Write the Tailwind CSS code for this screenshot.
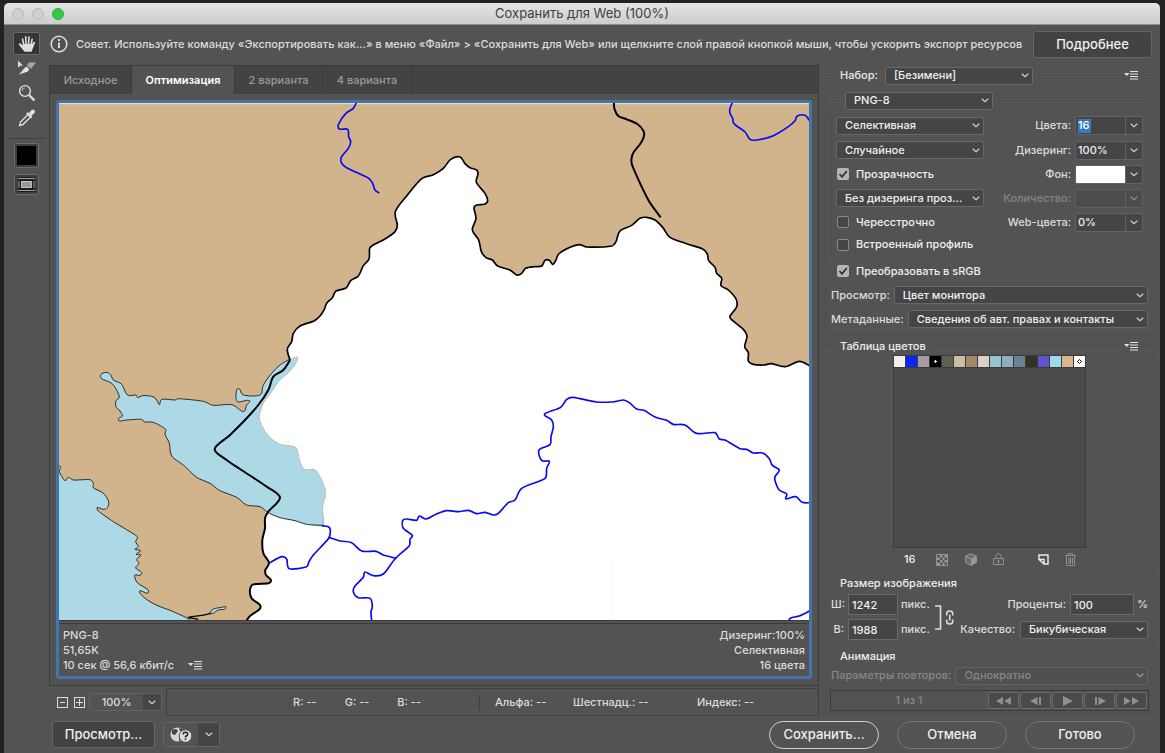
<!DOCTYPE html>
<html lang="ru">
<head>
<meta charset="utf-8">
<title>Сохранить для Web (100%)</title>
<script src="https://cdn.jsdelivr.net/npm/@tailwindcss/browser@4"></script>
</head>
<body class="bg-[#242323] font-['Inter',sans-serif] text-[11px] leading-[15px] font-medium text-[#dcdcdc]">
<svg class="hidden">
  <symbol id="chev" viewBox="0 0 8 5"><path d="M.7.8 4 3.800 7.300.8" fill="none" stroke="#d0d0d0" stroke-width="1.200"/></symbol>
  <symbol id="menu" viewBox="0 0 15 9"><path d="M0 2h5.500L2.750 5z" fill="#e2e2e2"/><path d="M6 .5h8M6 3h8M6 5.500h8M6 8h8" stroke="#e2e2e2" stroke-width="1.100"/></symbol>
</svg>
<div class="flex min-h-screen flex-col pt-[3px] pr-[5px] pl-1">
<div class="flex flex-1 flex-col rounded-t-[5px] border-b border-[#444] bg-[#535353]">
  <header class="grid h-[22px] grid-cols-[1fr_auto_1fr] items-center rounded-t-[5px] border-b border-[#8d9390] bg-linear-to-b from-[#e4e4e4] to-[#cdcdcd] px-2">
    <div class="flex gap-2">
      <button aria-label="Закрыть" class="size-3 rounded-full border border-[#b9b9b9] bg-[#d0d0d0]"></button>
      <button aria-label="Свернуть" class="size-3 rounded-full border border-[#b9b9b9] bg-[#d0d0d0]"></button>
      <button aria-label="Развернуть" class="size-3 rounded-full border border-[#2cad3c] bg-[#35c84a]"></button>
    </div>
    <h1 class="text-[13px] font-normal text-[#404040]">Сохранить для Web (100%)</h1>
    <span></span>
  </header>

  <div class="flex flex-1">
    <nav aria-label="Инструменты" class="flex w-[45px] flex-col items-center pt-[7px]">
      <button aria-label="Рука" class="grid h-[23px] w-[27px] place-items-center rounded-[2px] border border-[#6a6a6a] bg-[#353535]">
        <svg width="18" height="18" viewBox="0 0 18 18"><path d="M5.800 10.500 4.600 4M8 9 7.700 1.800M10.500 9 11 2M13 10l1.100-5.600" stroke="#dedede" stroke-width="1.600" stroke-linecap="round"/><path d="M5 9h9l1.200-1.600q1.400-1.300 2 0l-1.800 4.600-1.900 4.700H6.600L3.500 13 .8 9.500q-.1-1.600 1.600-1.100L5 10.600z" fill="#dedede"/></svg>
      </button>
      <button aria-label="Выделение фрагмента" class="grid h-[26px] w-[27px] place-items-center">
        <svg width="20" height="16" viewBox="0 0 20 16"><path d="M1 .5v7.500l2-2.200h3z" fill="#dedede"/><path d="M9.500 6 12 2.500h7L13.800 9 11.500 6.500z" fill="#a5a5a5"/><path d="m2 14.500 6-7 2-.8 2.200 2.200L11 11.500z" fill="#e2e2e2"/></svg>
      </button>
      <button aria-label="Масштаб" class="grid h-[24px] w-[27px] place-items-center">
        <svg width="18" height="18" viewBox="0 0 18 18" fill="none" stroke="#dedede"><circle cx="7" cy="7" r="5.400" stroke-width="1.400"/><path d="M4.200 7Q4.200 4 7 4" stroke="#aaa" stroke-width="1.200"/><path d="m11 11 5.500 5.500" stroke-width="2.400"/></svg>
      </button>
      <button aria-label="Пипетка" class="grid h-[26px] w-[27px] place-items-center">
        <svg width="18" height="18" viewBox="0 0 18 18"><path d="M9.500 6 2.500 13 1.600 16.400l3.400-.9 7-7" fill="none" stroke="#dedede" stroke-width="1.400"/><path d="m8 4.800 1.500-1.500 1.500.7 2.500-3q1.700-1 2.900.2t.2 2.900l-3 2.500.7 1.500-1.500 1.500z" fill="#dedede"/></svg>
      </button>
      <div class="mt-[7px] h-px w-[37px] bg-[#3f3f3f]"></div>
      <button aria-label="Цвет пипетки" class="mt-1 grid size-[25px] place-items-center rounded-[2px] border border-[#6c6c6c] bg-[#3f3f3f]"><span class="size-[19px] bg-black"></span></button>
      <button aria-label="Показать фрагменты" class="mt-[6px] grid h-[21px] w-[25px] place-items-center rounded-[2px] border border-[#6c6c6c] bg-[#3f3f3f]">
        <svg width="17" height="15" viewBox="0 0 17 15"><path d="M0 0h17v15H0z" fill="#1c1c1c"/><path d="M0 1.500h17M0 13.500h17M1 4v7M16 4v7" stroke="#9c9c9c"/><path d="M3.500 4.500h10v6h-10z" fill="#999" stroke="#c4c4c4"/></svg>
      </button>
    </nav>

    <div class="flex min-w-0 flex-1 flex-col">
      <div class="flex h-[38px] items-center pr-2 pl-[1px]">
        <svg width="18" height="18" viewBox="0 0 18 18" class="mr-2 shrink-0"><circle cx="9" cy="9" r="7.800" fill="none" stroke="#dedede" stroke-width="1.500"/><path d="M9 4v2M9 7.500V13" stroke="#dedede" stroke-width="1.900"/></svg>
        <p class="flex-1 whitespace-nowrap">Совет. Используйте команду «Экспортировать как...» в меню «Файл» &gt; «Сохранить для Web» или щелкните слой правой кнопкой мыши, чтобы ускорить экспорт ресурсов</p>
        <button class="h-[27px] w-[119px] shrink-0 rounded-[3px] border border-[#666] bg-[#434343] text-[13px] text-[#f0f0f0]">Подробнее</button>
      </div>

      <div class="flex flex-1">
        <main class="mt-[2px] flex min-w-0 flex-1 flex-col">
          <section class="flex flex-1 flex-col border border-[#3b3b3b]">
            <div role="tablist" class="flex h-[28px] bg-[#434343] text-[#9a9a9a]">
              <button role="tab" class="w-[82px] border-r border-[#3a3a3a]">Исходное</button>
              <button role="tab" aria-selected="true" class="w-[102px] bg-[#535353] font-semibold text-white">Оптимизация</button>
              <button role="tab" class="w-[89px] border-x border-[#3a3a3a]">2 варианта</button>
              <button role="tab" class="w-[89px] border-r border-[#3a3a3a]">4 варианта</button>
            </div>
            <div class="mx-[6px] mt-[6px] mb-[6px] flex flex-1 flex-col rounded-[3px] border-3 border-[#4475aa]">
              <svg id="map" class="block w-full flex-1" viewBox="177 309 2250 1551" preserveAspectRatio="xMidYMid slice" fill="none" stroke-linejoin="round">
                <path d="M177 309h2250v1551H177z" fill="#d1b48c"/>
                <path d="M177 311h2250" stroke="#eee6d8" stroke-width="3"/>
                <path fill="#fff" d="M740 1860 750 1848 778 1828 780 1815 755 1795 750 1770 760 1753 805 1750 813 1740 798 1725 796 1710 807 1688 790 1660 787 1620 795 1585 795 1555 805 1535 840 1493 800 1460 644 1347 690 1305 735 1260 775 1215 805 1170 820 1130 850 1110 870 1080 862 1048 875 1025 880 1000 900 978 942 963 960 948 973 928 980 910 997 893 1008 873 1038 864 1052 842 1075 828 1090 797 1107 777 1109 745 1120 735 1155 717 1185 695 1192 675 1186 635 1220 588 1265 536 1300 524 1330 505 1352 478 1380 471 1395 491 1410 503 1430 510 1434 522 1429 547 1455 580 1463 602 1453 613 1430 615 1422 625 1428 655 1417 690 1436 720 1444 755 1458 773 1477 780 1493 798 1530 810 1550 825 1565 820 1577 805 1605 800 1625 798 1635 781 1648 781 1658 793 1668 780 1676 762 1710 742 1738 734 1760 741 1835 738 1848 725 1860 693 1895 676 1920 655 1940 652 1965 660 1988 682 2010 712 2060 731 2108 747 2122 762 2126 782 2145 802 2150 820 2165 835 2163 857 2185 870 2208 897 2210 920 2190 948 2194 958 2230 988 2241 1008 2234 1040 2245 1058 2245 1083 2260 1093 2290 1095 2315 1091 2355 1100 2398 1084 2430 1098V1860z"/>
                <g transform="translate(150 1020)" stroke="#2c2c2c" stroke-width="3">
                  <path stroke="none" fill="#add8e6" d="M743 52 738 70 715 98 690 120 665 155 640 190 628 230 635 255 655 287 690 313 720 317 740 325 747 355 762 387 795 390 815 420 827 460 818 500 820 556 770 553 735 542 690 533 655 518 630 500 590 495 560 472 510 452 480 430 440 412 400 375 365 348 358 310 345 283 347 268 310 247 283 246 275 238 230 240 208 243 205 236 217 228 210 213 198 200 198 182 208 172 200 150 185 130 155 116 152 104 168 97 182 104 190 120 215 133 232 165 258 165 263 173 278 167 305 169 318 177 328 194 335 178 375 180 385 176 460 184 490 196 545 194 580 215 590 195 600 184 590 181 565 186 558 175 560 150 568 146 580 165 630 165 640 135 665 100 690 75 720 57z"/>
                  <path stroke="#b7a58c" stroke-dasharray="5 3" d="M722 55 743 52 738 70 715 98 690 120 665 155 640 190 628 230 635 255 655 287 690 313 720 317 740 325 747 355 762 387 795 390 815 420 827 460 818 500 820 556"/>
                  <path d="M820 556 770 553 735 542 690 533 655 518 630 500 590 495 560 472 510 452 480 430 440 412 400 375 365 348 358 310 345 283 347 268 310 247 283 246 275 238 230 240 208 243 205 236 217 228 210 213 198 200 198 182 208 172 200 150 185 130 155 116 152 104 168 97 182 104 190 120 215 133 232 165 258 165 263 173 278 167 305 169 318 177 328 194 335 178 375 180 385 176 460 184 490 196 545 194 580 215 590 195 600 184 590 181 565 186 558 175 560 150 568 146 580 165 630 165 640 135 665 100 690 75 720 57"/>
                  <path fill="#add8e6" d="M22 378 32 380 28 395 45 422 55 412 70 420 120 419 130 430 130 443 160 460 176 485 172 503 160 508 142 502 145 513 190 545 262 590 257 605 265 620 255 628 272 632 258 643 273 645 260 658 267 670 257 684 275 697 270 706 254 706 262 728 295 750 292 760 270 752 272 763 300 785 330 800 370 815 415 842 22 846z"/>
                  <path fill="#add8e6" d="M478 820 490 807 515 802 527 800 524 808 505 810 490 820z"/>
                  <path d="M445 838 415 832 450 827 482 820" stroke="#000" stroke-width="4"/>
                  <path d="M285 668H650" stroke="#c4bba8" stroke-width="2" stroke-dasharray="4 6"/>
                </g>
                <path stroke="#000" stroke-width="5" d="M870 1080 862 1048 875 1025 880 1000 900 978 942 963 960 948 973 928 980 910 997 893 1008 873 1038 864 1052 842 1075 828 1090 797 1107 777 1109 745 1120 735 1155 717 1185 695 1192 675 1186 635 1220 588 1265 536 1300 524 1330 505 1352 478 1380 471 1395 491 1410 503 1430 510 1434 522 1429 547 1455 580 1463 602 1453 613 1430 615 1422 625 1428 655 1417 690 1436 720 1444 755 1458 773 1477 780 1493 798 1530 810 1550 825 1565 820 1577 805 1605 800 1625 798 1635 781 1648 781 1658 793 1668 780 1676 762 1710 742 1738 734 1760 741 1835 738 1848 725 1860 693 1895 676 1920 655 1940 652 1965 660 1988 682 2010 712 2060 731 2108 747 2122 762 2126 782 2145 802 2150 820 2165 835 2163 857 2185 870 2208 897 2210 920 2190 948 2194 958 2230 988 2241 1008 2234 1040 2245 1058 2245 1083 2260 1093 2290 1095 2315 1091 2355 1100 2398 1084 2430 1098"/>
                <path stroke="#000" stroke-width="6" d="M738 1864 750 1848 778 1828 780 1815 755 1795 750 1770 760 1753 805 1750 813 1740 798 1725 796 1710 807 1688 790 1660 787 1620 795 1585 795 1555 805 1535 840 1493 800 1460 720 1407 680 1380 644 1347 690 1305 735 1260 775 1215 805 1170 820 1130 850 1110 870 1080"/>
                <path d="M1838 310V736" stroke="#c8b89c" stroke-width="3"/>
                <path d="M1837 1692V1860" stroke="#d9d9d9" stroke-width="2" stroke-dasharray="3 6"/>
                <path stroke="#000" stroke-width="6" d="M1842 306 1843 325 1855 348 1880 358 1912 372 1930 392 1932 408 1922 430 1900 458 1894 480 1898 500 1945 600 1982 652"/>
                <g stroke="#0a0aee" stroke-width="5">
                  <path d="M1070 305 1060 325 1037 341 1016 372 1018 387 1043 388 1046 410 1052 425 1045 445 1025 470 1024 488 1040 503 1105 534 1118 550 1125 570 1138 579"/>
                  <path d="M2198 306 2190 325 2190 340 2198 355 2200 368 2210 378 2235 396 2250 418 2270 420 2320 407 2365 380 2385 362 2392 348 2415 346 2430 364"/>
                  <g transform="translate(750 1140)">
                    <path d="M365 722 363 695 367 680 360 655 325 653 310 635 315 618 340 592 345 576 370 587 400 582 435 537 478 497 480 478 487 466 460 445 458 422 470 417 500 421 508 408 528 417 555 404 590 392 625 395 655 391 680 401 705 397 730 405 745 400 775 368 795 360 815 325 885 295 890 265 898 244 875 241 867 210 900 194 903 170 910 140 905 120 884 102 932 82 950 58 970 52 1040 66 1095 65 1120 60 1138 68 1160 87 1182 91 1215 111 1250 121 1270 133 1305 135 1340 160 1395 158 1408 177 1425 180 1470 206 1490 208 1510 219 1538 219 1558 236 1567 256 1588 270 1575 290 1576 305 1588 330 1610 342 1608 357 1637 350 1657 367 1680 368"/>
                    <path d="M215 437 235 440 241 450 236 475 190 525 177 545 170 560 118 566 110 537 95 530 60 548M236 472 270 483 305 488 335 513 378 514 400 525 438 535M1616 722 1622 714 1650 707 1680 692"/>
                  </g>
                </g>
              </svg>
              <div class="h-[4px] border-y border-[#3b3b3b]"></div>
              <div class="flex justify-between px-1 pt-1 pb-[3px]">
                <div><p>PNG-8</p><p>51,65K</p><div class="flex items-center gap-[14px]">10 сек @ 56,6 кбит/с <button aria-label="Меню скорости загрузки"><svg width="15" height="9"><use href="#menu"/></svg></button></div></div>
                <div class="text-right"><p>Дизеринг:100%</p><p>Селективная</p><p>16 цвета</p></div>
              </div>
            </div>
          </section>
          <div class="mt-[2px] flex h-[28px] items-center">
            <button aria-label="Уменьшить" class="ml-2 grid size-[11px] place-items-center border border-[#dedede]"><span class="h-px w-[5px] bg-[#dedede]"></span></button>
            <button aria-label="Увеличить" class="ml-[6px] grid size-[11px] place-items-center border border-[#dedede]"><svg width="7" height="7"><path d="M0 3.500h7M3.500 0v7" stroke="#dedede"/></svg></button>
            <div class="ml-1 flex h-[18px] w-[73px] rounded-[2px] border border-[#636363]">
              <input aria-label="Масштаб просмотра" value="100%" class="w-0 flex-1 text-center text-[#dcdcdc]">
              <button aria-label="Выбрать масштаб" class="grid w-[18px] place-items-center bg-[#454545]"><svg width="8" height="5"><use href="#chev"/></svg></button>
            </div>
            <div class="ml-1 flex h-[28px] flex-1 items-center border border-[#3f3f3f]">
              <div class="flex w-[313px] justify-end gap-[28px] border-r border-[#3f3f3f] pr-[58px]"><span>R: --</span><span>G: --</span><span>B: --</span></div>
              <span class="ml-[15px] w-[78px]">Альфа: --</span><span class="w-[124px]">Шестнадц.: --</span><span>Индекс: --</span>
            </div>
          </div>
        </main>

        <aside class="mr-[7px] ml-[6px] w-[328px] shrink-0">
          <section>
            <div class="flex h-[25px] items-center">
              <span class="h-px w-[10px] bg-[#4d4d4d]"></span>
              <label for="preset" class="ml-[5px] w-[45px] text-[#e8e8e8]">Набор:</label>
              <div class="grid w-[148px] items-center"><select id="preset" class="col-start-1 row-start-1 h-[18px] appearance-none rounded-[2px] border border-[#686868] bg-[#454545] pl-2 text-[#f0f0f0]"><option>[Безимени]</option></select><svg width="8" height="5" class="pointer-events-none col-start-1 row-start-1 mr-1 justify-self-end"><use href="#chev"/></svg></div>
              <span class="ml-[5px] h-px flex-1 bg-[#4d4d4d]"></span>
              <button aria-label="Меню оптимизации" class="mx-[3px]"><svg width="15" height="9"><use href="#menu"/></svg></button>
              <span class="h-px w-[11px] bg-[#4d4d4d]"></span>
            </div>
            <div class="border-x border-b border-[#4f4f4f] pr-1 pb-px pl-[5px]">
              <div class="flex h-[25px] items-center">
                <span class="mr-[5px] h-px w-[9px] bg-[#4d4d4d]"></span>
                <div class="grid w-[148px] items-center"><select aria-label="Формат" class="col-start-1 row-start-1 h-[18px] appearance-none rounded-[2px] border border-[#686868] bg-[#454545] pl-2 text-[#f0f0f0]"><option>PNG-8</option></select><svg width="8" height="5" class="pointer-events-none col-start-1 row-start-1 mr-1 justify-self-end"><use href="#chev"/></svg></div>
                <span class="ml-[5px] h-px flex-1 bg-[#4d4d4d]"></span>
              </div>
              <div class="border-x border-b border-[#4f4f4f] pr-1 pb-[2px] pl-1">
                <div class="flex h-[25px] items-center">
                  <div class="grid w-[148px] items-center"><select aria-label="Алгоритм" class="col-start-1 row-start-1 h-[18px] appearance-none rounded-[2px] border border-[#686868] bg-[#454545] pl-2 text-[#f0f0f0]"><option>Селективная</option></select><svg width="8" height="5" class="pointer-events-none col-start-1 row-start-1 mr-1 justify-self-end"><use href="#chev"/></svg></div>
                  <label for="colors" class="mr-1 flex-1 text-right">Цвета:</label>
                  <div class="flex h-[19px] w-[68px] rounded-[2px] border border-[#636363] bg-[#454545]"><div class="flex flex-1 items-center border-r border-[#636363] pl-[2px]"><input id="colors" value="16" class="h-[14px] w-[13px] bg-[#3b7bbd] text-white"></div><button aria-label="Выбрать число цветов" class="grid w-4 place-items-center"><svg width="8" height="5"><use href="#chev"/></svg></button></div>
                </div>
                <div class="flex h-[24px] items-center">
                  <div class="grid w-[148px] items-center"><select aria-label="Метод дизеринга" class="col-start-1 row-start-1 h-[18px] appearance-none rounded-[2px] border border-[#686868] bg-[#454545] pl-2 text-[#f0f0f0]"><option>Случайное</option></select><svg width="8" height="5" class="pointer-events-none col-start-1 row-start-1 mr-1 justify-self-end"><use href="#chev"/></svg></div>
                  <label for="dither" class="mr-1 flex-1 text-right">Дизеринг:</label>
                  <div class="flex h-[19px] w-[68px] rounded-[2px] border border-[#636363] bg-[#454545]"><input id="dither" value="100%" class="w-0 flex-1 border-r border-[#636363] pl-[2px] text-[#f0f0f0]"><button aria-label="Выбрать дизеринг" class="grid w-4 place-items-center"><svg width="8" height="5"><use href="#chev"/></svg></button></div>
                </div>
                <div class="flex h-[24px] items-center pl-px">
                  <label class="flex items-center gap-[7px] text-[#f0f0f0]"><span class="grid"><input type="checkbox" checked class="col-start-1 row-start-1 size-[12px] appearance-none rounded-[2px] bg-[#b5b5b5]"><svg width="12" height="12" class="col-start-1 row-start-1"><path d="m2.500 6 2.500 2.800L9.800 3" fill="none" stroke="#333" stroke-width="1.800"/></svg></span>Прозрачность</label>
                  <span class="mr-1 flex-1 text-right">Фон:</span>
                  <div class="flex h-[19px] w-[68px] rounded-[2px] border border-[#636363] bg-[#454545]"><button aria-label="Цвет фона" class="flex-1 border-r border-[#636363] bg-white"></button><button aria-label="Выбрать фон" class="grid w-4 place-items-center"><svg width="8" height="5"><use href="#chev"/></svg></button></div>
                </div>
                <div class="flex h-[24px] items-center">
                  <div class="grid w-[148px] items-center"><select aria-label="Дизеринг прозрачности" class="col-start-1 row-start-1 h-[18px] appearance-none rounded-[2px] border border-[#686868] bg-[#454545] pl-2 text-[#f0f0f0]"><option>Без дизеринга проз...</option></select><svg width="8" height="5" class="pointer-events-none col-start-1 row-start-1 mr-1 justify-self-end"><use href="#chev"/></svg></div>
                  <label for="amount" class="mr-1 flex-1 text-right text-[#848484]">Количество:</label>
                  <div class="flex h-[19px] w-[68px] rounded-[2px] border border-[#5f5f5f] bg-[#4c4c4c]"><input id="amount" disabled class="w-0 flex-1 border-r border-[#5f5f5f]"><button disabled aria-label="Выбрать количество" class="grid w-4 place-items-center opacity-50"><svg width="8" height="5"><use href="#chev"/></svg></button></div>
                </div>
                <div class="flex h-[24px] items-center pl-px">
                  <label class="flex items-center gap-[7px] text-[#f0f0f0]"><input type="checkbox" class="size-[12px] appearance-none rounded-[2px] border border-[#8a8a8a] bg-[#454545]">Чересстрочно</label>
                  <label for="webc" class="mr-1 flex-1 text-right">Web-цвета:</label>
                  <div class="flex h-[19px] w-[68px] rounded-[2px] border border-[#636363] bg-[#454545]"><input id="webc" value="0%" class="w-0 flex-1 border-r border-[#636363] pl-[2px] text-[#f0f0f0]"><button aria-label="Выбрать Web-цвета" class="grid w-4 place-items-center"><svg width="8" height="5"><use href="#chev"/></svg></button></div>
                </div>
                <div class="flex h-[21px] items-center pl-px">
                  <label class="flex items-center gap-[7px] text-[#f0f0f0]"><input type="checkbox" class="size-[12px] appearance-none rounded-[2px] border border-[#8a8a8a] bg-[#454545]">Встроенный профиль</label>
                </div>
              </div>
              <div class="flex h-[26px] items-center pl-[6px]">
                <label class="flex items-center gap-[7px] text-[#f0f0f0]"><span class="grid"><input type="checkbox" checked class="col-start-1 row-start-1 size-[12px] appearance-none rounded-[2px] bg-[#b5b5b5]"><svg width="12" height="12" class="col-start-1 row-start-1"><path d="m2.500 6 2.500 2.800L9.800 3" fill="none" stroke="#333" stroke-width="1.800"/></svg></span>Преобразовать в sRGB</label>
              </div>
              <div class="flex h-[22px] items-center gap-1">
                <label for="view">Просмотр:</label>
                <div class="grid flex-1 items-center"><select id="view" class="col-start-1 row-start-1 h-[18px] appearance-none rounded-[2px] border border-[#686868] bg-[#454545] pl-2 text-[#f0f0f0]"><option>Цвет монитора</option></select><svg width="8" height="5" class="pointer-events-none col-start-1 row-start-1 mr-1 justify-self-end"><use href="#chev"/></svg></div>
              </div>
              <div class="flex h-[26px] items-center gap-1">
                <label for="meta">Метаданные:</label>
                <div class="grid flex-1 items-center"><select id="meta" class="col-start-1 row-start-1 h-[18px] appearance-none rounded-[2px] border border-[#686868] bg-[#454545] pl-2 text-[#f0f0f0]"><option>Сведения об авт. правах и контакты</option></select><svg width="8" height="5" class="pointer-events-none col-start-1 row-start-1 mr-1 justify-self-end"><use href="#chev"/></svg></div>
              </div>
            </div>
          </section>

          <section class="mt-[3px]">
            <div class="flex h-[18px] items-center">
              <span class="h-px w-[10px] bg-[#4d4d4d]"></span>
              <h2 class="mx-[5px] text-[#eee]">Таблица цветов</h2>
              <span class="h-px flex-1 bg-[#4d4d4d]"></span>
              <button aria-label="Меню таблицы цветов" class="mx-[3px]"><svg width="15" height="9"><use href="#menu"/></svg></button>
              <span class="h-px w-[11px] bg-[#4d4d4d]"></span>
            </div>
            <div class="border-x border-b border-[#4f4f4f]">
              <div class="ml-[67px] size-[193px] border border-[#3b3b3b] bg-[#4a4a4a]">
                <div class="grid h-[12px] grid-cols-16 gap-px border-b border-[#3b3b3b] bg-[#3b3b3b]">
                  <i class="bg-[#f3eee7]"></i><i class="bg-[#0b24fb]"></i><i class="bg-[#a69ba0]"></i><i class="grid place-items-center bg-black"><svg width="3" height="3"><path d="M0 1.500h3M1.500 0v3" stroke="#fff"/></svg></i><i class="bg-[#605f50]"></i><i class="bg-[#cbbda1]"></i><i class="bg-[#a3886a]"></i><i class="bg-[#dbd2c6]"></i><i class="bg-[#94c5d3]"></i><i class="bg-[#8cafc4]"></i><i class="bg-[#6d8195]"></i><i class="bg-[#363029]"></i><i class="bg-[#6152cf]"></i><i class="bg-[#9ddbe6]"></i><i class="bg-[#dcb48d]"></i><i class="grid place-items-center bg-white"><svg width="7" height="7"><path d="m3.500 1.500 2 2-2 2-2-2z" fill="none" stroke="#000"/></svg></i>
                </div>
              </div>
              <div class="flex h-[23px] items-center pl-[78px]">
                <span class="w-[32px] text-[#eee]">16</span>
                <button aria-label="Прозрачный цвет" class="mr-[17px]"><svg width="12" height="12"><path d="M.5.500h11v11H.5z" fill="none" stroke="#969696"/><path d="M4 1h2.500v2.500H4zM8.500 1H11v2.500H8.500zM1 3.500h3V6H1zM6.500 3.500h2V6h-2zM4 6h2.500v2.500H4zM8.500 6H11v2.500H8.500zM1 8.500h3V11H1zM6.500 8.500h2V11h-2z" fill="#969696"/></svg></button>
                <button aria-label="Web-цвет" class="mr-[16px]"><svg width="12" height="13" viewBox="0 0 12 13"><path d="m6 .5 5.300 2.700v6.300L6 12.500.7 9.500V3.200z" fill="#6c6c6c" stroke="#999"/><path d="M6 6l5.300-2.800v6.300L6 12.500z" fill="#999"/><path d="M.7 3.200 6 6l5.300-2.800" fill="none" stroke="#999"/></svg></button>
                <button aria-label="Закрепить цвет" class="mr-[34px]"><svg width="11" height="13" viewBox="0 0 11 13" fill="none" stroke="#909090"><path d="M.5 5.500h10v6H.5zM3 5.500V3q0-2.200 2.500-2.200T8 3v2.500"/><path d="M5.500 7v3" stroke-width="1.600"/></svg></button>
                <button aria-label="Новый цвет" class="mr-[16px]"><svg width="11" height="11" fill="none" stroke="#ededed" stroke-width="1.400"><path d="M1 5V1h9v9H6L1 5.500h5V10"/></svg></button>
                <button aria-label="Удалить цвет"><svg width="11" height="13" viewBox="0 0 11 13" fill="none" stroke="#909090"><path d="M0 2.500h11M3.500 2V.5h4V2M1.500 3v9.500h8V3M4 4.500V11M5.500 4.500V11M7.500 4.500V11"/></svg></button>
              </div>
            </div>
          </section>

          <section class="mt-[2px]">
            <div class="flex h-[19px] items-center"><span class="h-px w-[10px] bg-[#4d4d4d]"></span><h2 class="mx-[5px] text-[#eee]">Размер изображения</h2><span class="h-px flex-1 bg-[#4d4d4d]"></span></div>
            <div class="flex border-x border-b border-[#4f4f4f] pr-1 pb-[3px] pl-[5px]">
              <div class="flex w-[99px] flex-col gap-1 pt-px">
                <div class="flex items-center"><label for="w" class="mr-1 w-[13px] text-right">Ш:</label><input id="w" value="1242" class="mr-[3px] h-[21px] w-[50px] border border-[#6a6a6a] bg-[#454545] pl-[3px] text-[#f0f0f0]">пикс.</div>
                <div class="flex items-center"><label for="h" class="mr-1 w-[13px] text-right">В:</label><input id="h" value="1988" class="mr-[3px] h-[21px] w-[50px] border border-[#6a6a6a] bg-[#454545] pl-[3px] text-[#f0f0f0]">пикс.</div>
              </div>
              <svg width="21" height="28" viewBox="0 0 21 28" class="mt-[11px] ml-1 shrink-0" fill="none" stroke="#dedede"><path d="M1 2h5.500v23H1" stroke-width="1.600"/><path d="M12.700 11.500V9.500q0-2.500 3-2.500t3 2.500v2M12.700 15.500v2q0 2.500 3 2.500t3-2.500v-2M15.700 10.500v6" stroke-width="1.500"/></svg>
              <div class="flex flex-1 flex-col gap-1 pt-px">
                <div class="flex items-center justify-end"><label for="pc" class="mr-1">Проценты:</label><input id="pc" value="100" class="mr-[3px] h-[21px] w-[64px] border border-[#6a6a6a] bg-[#454545] pl-[3px] text-[#f0f0f0]">%</div>
                <div class="flex h-[21px] items-center justify-end gap-[5px]"><label for="q">Качество:</label>
                <div class="grid w-[128px] items-center"><select id="q" class="col-start-1 row-start-1 h-[18px] appearance-none rounded-[2px] border border-[#686868] bg-[#454545] pl-2 text-[#f0f0f0]"><option>Бикубическая</option></select><svg width="8" height="5" class="pointer-events-none col-start-1 row-start-1 mr-1 justify-self-end"><use href="#chev"/></svg></div></div>
              </div>
            </div>
          </section>

          <section class="mt-[3px]">
            <div class="flex h-[19px] items-center"><span class="h-px w-[10px] bg-[#4d4d4d]"></span><h2 class="mx-[5px] text-[#eee]">Анимация</h2><span class="h-px flex-1 bg-[#4d4d4d]"></span></div>
            <div class="border-x border-b border-[#4f4f4f] pr-[3px] pb-[3px] pl-1 text-[#878787]">
              <div class="flex h-[19px] items-center gap-1 px-px"><label for="loop">Параметры повторов:</label>
              <div class="grid flex-1 items-center"><select id="loop" disabled class="col-start-1 row-start-1 h-[18px] appearance-none rounded-[2px] border border-[#636363] bg-[#505050] pl-2 text-[#878787]"><option>Однократно</option></select><svg width="8" height="5" class="pointer-events-none col-start-1 row-start-1 mr-1 justify-self-end opacity-60"><use href="#chev"/></svg></div></div>
              <div class="mt-[5px] flex h-[21px] items-center gap-px border border-[#3b3b3b] pr-px">
                <span class="flex-1 text-center">1 из 1</span>
                <button disabled aria-label="Первый кадр" class="grid h-[17px] w-[31px] place-items-center rounded-[2px] border border-[#686868] bg-[#4a4a4a]"><svg width="15" height="8" fill="#909090"><path d="M7 0v8L0 4zM15 0v8L8 4z"/></svg></button>
                <button disabled aria-label="Предыдущий кадр" class="grid h-[17px] w-[31px] place-items-center rounded-[2px] border border-[#686868] bg-[#4a4a4a]"><svg width="12" height="8" fill="#909090"><path d="M7.500 0v8L0 4zM9 0h2v8H9z"/></svg></button>
                <button disabled aria-label="Воспроизвести" class="grid h-[17px] w-[31px] place-items-center rounded-[2px] border border-[#686868] bg-[#4a4a4a]"><svg width="10" height="10" fill="#909090"><path d="m0 0 10 5-10 5z"/></svg></button>
                <button disabled aria-label="Следующий кадр" class="grid h-[17px] w-[31px] place-items-center rounded-[2px] border border-[#686868] bg-[#4a4a4a]"><svg width="12" height="8" fill="#909090"><path d="M1 0h2v8H1zM4.500 0v8L12 4z"/></svg></button>
                <button disabled aria-label="Последний кадр" class="grid h-[17px] w-[31px] place-items-center rounded-[2px] border border-[#686868] bg-[#4a4a4a]"><svg width="15" height="8" fill="#909090"><path d="M0 0v8l7-4zM8 0v8l7-4z"/></svg></button>
              </div>
            </div>
          </section>
        </aside>
      </div>

      <footer class="flex h-[37px] items-center pr-[25px] pl-[3px] text-[13px] text-[#f0f0f0]">
        <button class="h-[27px] w-[103px] rounded-[3px] border border-[#666] bg-[#434343]">Просмотр...</button>
        <div class="ml-2 flex h-[25px] w-[57px] rounded-[3px] border border-[#666]">
          <button aria-label="Просмотр в браузере" class="grid flex-1 place-items-center"><svg width="23" height="16" viewBox="0 0 23 16"><circle cx="7.500" cy="7.500" r="7" fill="#d5d5d5"/><path d="m2 3 4-1 2 2-3 4-3-1zM9 9l3-2v5l-3 2zM9 1l3 1 1 2-3 0z" fill="#444"/><circle cx="15.500" cy="9" r="6.300" fill="#ddd" stroke="#555"/><path d="M13.300 7.500q0-2.200 2.200-2.200t2.200 1.900q0 1.300-2.200 2.300v1M15.500 11.500v1.500" fill="none" stroke="#222" stroke-width="1.500"/></svg></button>
          <button aria-label="Выбрать браузер" class="grid w-[21px] place-items-center bg-[#454545]"><svg width="8" height="5"><use href="#chev"/></svg></button>
        </div>
        <span class="flex-1"></span>
        <div class="flex gap-[18px]">
          <button class="h-[28px] w-[110px] rounded-full border border-[#d0d0d0]">Сохранить...</button>
          <button class="h-[28px] w-[110px] rounded-full border border-[#777]">Отмена</button>
          <button class="h-[28px] w-[110px] rounded-full border border-[#777]">Готово</button>
        </div>
      </footer>
    </div>
  </div>
</div>
</div>
<script>
// Turn the map's point lists into smooth curves that pass through every point.
for (const path of document.querySelectorAll('#map path')) {
  path.setAttribute('d', path.getAttribute('d').replace(/M([\d ]+)/g, (whole, run) => {
    const n = run.trim().split(/\s+/).map(Number);
    if (n.length < 6) return whole;
    const p = [];
    for (let i = 0; i < n.length; i += 2) p.push([n[i], n[i + 1]]);
    const at = i => p[Math.max(0, Math.min(p.length - 1, i))];
    let d = `M${p[0]}`;
    for (let i = 0; i < p.length - 1; i++) {
      const [a, b, c, e] = [at(i - 1), at(i), at(i + 1), at(i + 2)];
      const len = Math.hypot(c[0] - b[0], c[1] - b[1]);
      const handle = (u, v) => {
        const s = Math.hypot(v[0] - u[0], v[1] - u[1]) || 1;
        const k = Math.min(1 / 6, len / 3 / s);
        return [(v[0] - u[0]) * k, (v[1] - u[1]) * k];
      };
      const h1 = handle(a, c), h2 = handle(b, e);
      d += `C${b[0] + h1[0]} ${b[1] + h1[1]} ${c[0] - h2[0]} ${c[1] - h2[1]} ${c[0]} ${c[1]}`;
    }
    return d;
  }));
}
</script>
</body>
</html>
